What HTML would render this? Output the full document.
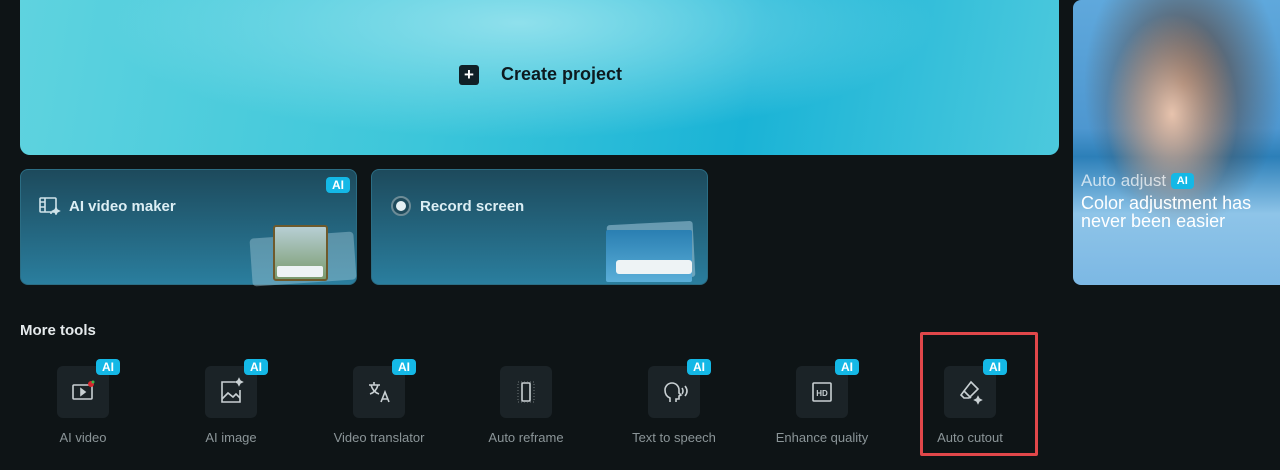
<!DOCTYPE html>
<html><head><style>
*{margin:0;padding:0;box-sizing:border-box}
body{width:1280px;height:470px;background:#0e1416;font-family:"Liberation Sans",sans-serif;position:relative;overflow:hidden}
.abs{position:absolute}
.banner{left:20px;top:-10px;width:1039px;height:165px;border-radius:10px;background:radial-gradient(ellipse 40% 70% at 48% 20%,#8fe0ec 0%,rgba(143,224,236,0) 100%),linear-gradient(100deg,#5fd3df 0%,#3cc6da 40%,#1ab3d6 70%,#4cc9dd 100%)}
.cp{left:459px;top:64px;display:flex;align-items:center;gap:22px;font-weight:bold;font-size:18px;color:#0d1a1f}
.cp .p{width:20px;height:20px;background:#102027;border-radius:3px;color:#fff;font-size:17px;line-height:20px;text-align:center}
.card{top:169px;width:337px;height:116px;border-radius:8px;background:linear-gradient(180deg,#1d4a5c,#2a7e9e);border:1px solid #2b6d84}
.card .t{position:absolute;left:48px;top:27px;color:#dceef4;font-weight:bold;font-size:15px}
.badge{background:#14b8e6;color:#fff;font-size:12px;font-weight:bold;border-radius:4px;padding:2px 6px;line-height:12px}
.right{left:1073px;top:0;width:220px;height:285px;border-radius:8px;background:radial-gradient(ellipse 30% 35% at 45% 40%,#e7c3ad,rgba(200,160,140,0) 100%),radial-gradient(ellipse 45% 50% at 50% 30%,#5a3a2a 0%,rgba(90,58,42,0) 100%),linear-gradient(180deg,#5fa8dc 0%,#4e97d0 45%,#2c7fb8 55%,#8ec4e8 75%,#7cb8e4 100%)}
.tool{top:366px;width:52px;height:52px;border-radius:6px;background:#1b2327}
.lbl{top:430px;width:148px;text-align:center;color:#8b9598;font-size:13px}
</style></head><body>
<div class="abs banner"></div>
<div class="abs cp"><div class="p">+</div>Create project</div>

<div class="abs card" style="left:20px">
<svg class="abs" style="left:18px;top:27px" width="22" height="18" viewBox="0 0 22 18" fill="none" stroke="#cfe3ea" stroke-width="1.6"><rect x="1" y="1" width="16" height="14" rx="1"/><path d="M6 1v14M1 5h5M1 10h5M12 15v2"/><path d="M17 11l1 2 2 1-2 1-1 2-1-2-2-1 2-1z" fill="#cfe3ea"/></svg>
<div class="t" style="top:28px">AI video maker</div>
<div class="abs badge" style="right:6px;top:7px">AI</div>
<div class="abs" style="left:230px;top:65px;width:104px;height:48px;background:rgba(160,200,215,.45);border-radius:4px;transform:rotate(-4deg)"></div>
<div class="abs" style="left:252px;top:55px;width:55px;height:56px;background:linear-gradient(180deg,#b7cfd4,#7a9a6e);border:2px solid #6e5a2c;border-radius:3px"></div>
<div class="abs" style="left:256px;top:96px;width:46px;height:11px;background:#eef3f5;border-radius:2px"></div>
</div>
<div class="abs card" style="left:371px">
<div class="abs" style="left:19px;top:26px;width:20px;height:20px;border-radius:50%;border:2px solid #6d8c97;background:#1f4b5c"><div style="margin:3px;width:10px;height:10px;border-radius:50%;background:#e6f1f4"></div></div>
<div class="t" style="top:28px">Record screen</div>
<div class="abs" style="left:236px;top:53px;width:86px;height:56px;background:rgba(160,200,220,.55);border-radius:3px;transform:rotate(-3deg)"></div>
<div class="abs" style="left:234px;top:60px;width:86px;height:52px;background:linear-gradient(180deg,#2a7fb2,#5aaed8);border-radius:2px"></div>
<div class="abs" style="left:244px;top:90px;width:76px;height:14px;background:#eef3f5;border-radius:3px"></div>
</div>

<div class="abs right">
<div class="abs" style="left:8px;top:171px;color:rgba(255,255,255,.7);font-size:17px">Auto adjust <span class="badge" style="font-size:11px;vertical-align:2px">AI</span></div>
<div class="abs" style="left:8px;top:194px;color:#fff;font-size:18px;line-height:18px;width:205px">Color adjustment has never been easier</div>
</div>

<div class="abs" style="left:20px;top:322px;color:#e5eaec;font-weight:bold;font-size:15px">More tools</div>

<div class="abs tool" style="left:57px"><svg width="52" height="52" viewBox="0 0 52 52" fill="none" stroke="#c9d0d3" stroke-width="1.6"><rect x="16" y="19" width="19" height="14" rx="1"/><path d="M24 23v6l4-3z" fill="#c9d0d3"/><circle cx="34" cy="18" r="3" fill="#d5262c" stroke="none"/><circle cx="36" cy="16" r="1.5" fill="#3db54a" stroke="none"/></svg></div>
<div class="abs tool" style="left:205px"><svg width="52" height="52" viewBox="0 0 52 52" fill="none" stroke="#c9d0d3" stroke-width="1.6"><path d="M30 16h-13v20h18v-12"/><path d="M17 33l6-6 5 4 3-3 4 4"/><path d="M34 13l1 2 2 1-2 1-1 2-1-2-2-1 2-1z" fill="#c9d0d3"/></svg></div>
<div class="abs tool" style="left:353px"><svg width="52" height="52" viewBox="0 0 52 52" fill="none" stroke="#c9d0d3" stroke-width="1.6"><path d="M16 19h11M21 16v3M18 19q2 7 8 9M25 19q-2 7-8 9M28 36l4-10 4 10M29.5 33h5"/></svg></div>
<div class="abs tool" style="left:500px"><svg width="52" height="52" viewBox="0 0 52 52" fill="none" stroke="#c9d0d3" stroke-width="1.6"><rect x="22" y="17" width="8" height="18" rx="1"/><rect x="18" y="16" width="16" height="20" stroke-dasharray="1 2" stroke-width="1" stroke="#6f777a"/></svg></div>
<div class="abs tool" style="left:648px"><svg width="52" height="52" viewBox="0 0 52 52" fill="none" stroke="#c9d0d3" stroke-width="1.6"><path d="M22 36v-4q-5-2-5-8a7 7 0 0 1 14 0v3l2 2-2 1v3h-3v3"/><path d="M34 22q2 3 0 6M37 20q4 5 0 10"/></svg></div>
<div class="abs tool" style="left:796px"><svg width="52" height="52" viewBox="0 0 52 52" fill="none" stroke="#c9d0d3" stroke-width="1.6"><rect x="17" y="17" width="18" height="18" rx="1"/><text x="26" y="30" font-size="8" font-weight="bold" fill="#c9d0d3" stroke="none" text-anchor="middle" font-family="Liberation Sans">HD</text></svg></div>
<div class="abs tool" style="left:944px"><svg width="52" height="52" viewBox="0 0 52 52" fill="none" stroke="#c9d0d3" stroke-width="1.6"><path d="M27 16l7 7-9 9h-5l-3-3 3-4z"/><path d="M20 25l7 7"/><path d="M34 31l1 2 2 1-2 1-1 2-1-2-2-1 2-1z" fill="#c9d0d3"/></svg></div>

<div class="abs badge" style="left:96px;top:359px">AI</div>
<div class="abs badge" style="left:244px;top:359px">AI</div>
<div class="abs badge" style="left:392px;top:359px">AI</div>
<div class="abs badge" style="left:687px;top:359px">AI</div>
<div class="abs badge" style="left:835px;top:359px">AI</div>
<div class="abs badge" style="left:983px;top:359px">AI</div>

<div class="abs lbl" style="left:9px">AI video</div>
<div class="abs lbl" style="left:157px">AI image</div>
<div class="abs lbl" style="left:305px">Video translator</div>
<div class="abs lbl" style="left:452px">Auto reframe</div>
<div class="abs lbl" style="left:600px">Text to speech</div>
<div class="abs lbl" style="left:748px">Enhance quality</div>
<div class="abs lbl" style="left:896px">Auto cutout</div>

<div class="abs" style="left:920px;top:332px;width:118px;height:124px;border:3px solid #e0474a;border-radius:2px"></div>
</body></html>
